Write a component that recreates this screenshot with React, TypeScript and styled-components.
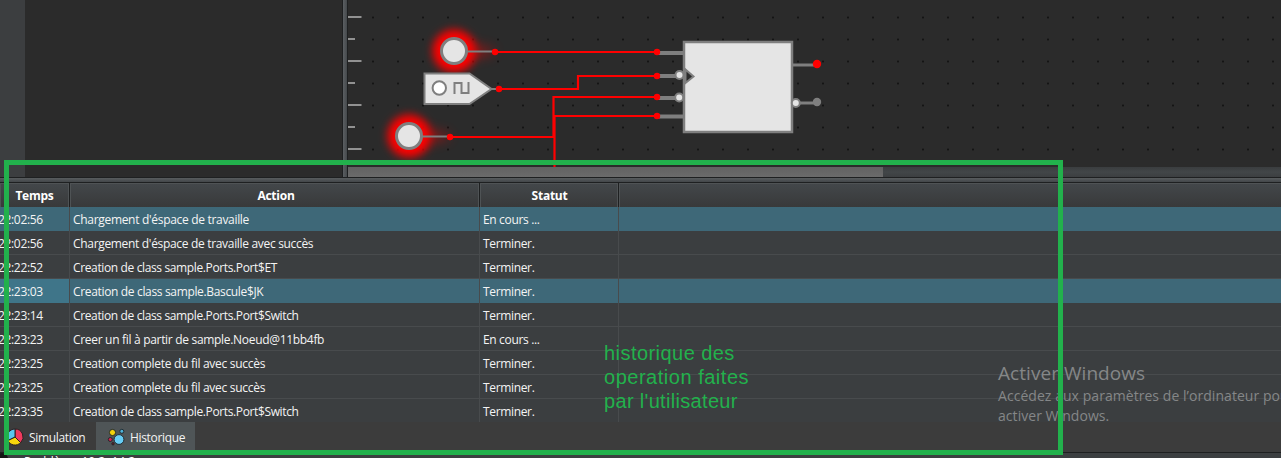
import React from 'react';
import styled, { createGlobalStyle } from 'styled-components';

const Global = createGlobalStyle`
  * { box-sizing: border-box; }
  body { margin: 0; background: #2b2b2b; overflow: hidden; }
`;

const Window = styled.div`
  position: relative;
  width: 1281px;
  height: 458px;
  overflow: hidden;
  display: flex;
  flex-direction: column;
  background: #3c3e40;
  color: #f4f4f4;
  font: 12px/24px 'Open Sans', 'Noto Sans', sans-serif;
`;

const Workspace = styled.div`
  display: flex;
  flex: none;
  height: 177px;
`;

const SideBar = styled.div`
  width: 25px;
  background: #3c3e40;
`;

const Explorer = styled.div`
  width: 317px;
  background: #2b2b2b;
`;

const VerticalSplitter = styled.div`
  width: 6px;
  border: solid #1e2021;
  border-width: 0 1px;
  background: linear-gradient(90deg, #5b5f62, #45494c);
`;

const Editor = styled.div`
  flex: 1;
  display: flex;
  flex-direction: column;
  background: #2b2b2b;
`;

const Board = styled.svg`
  display: block;
  flex: none;
`;

const ScrollTrack = styled.div`
  height: 10px;
  background: linear-gradient(#3a3d3f, #424648 50%, #3c3f41);
`;

const ScrollThumb = styled.div`
  width: 535px;
  height: 10px;
  background: linear-gradient(#626262, #6b6b6b);
`;

const HorizontalSplitter = styled.div`
  flex: none;
  height: 5px;
  border-top: 1px solid #1e2021;
  background: linear-gradient(#585c5e, #43474a);
`;

const columns = '70px 410px 139px 1fr';

const HeaderRow = styled.div`
  flex: none;
  display: grid;
  grid-template-columns: ${columns};
  height: 25px;
  border: solid #1e2021;
  border-width: 1px 0;
`;

const HeaderCell = styled.div<{ $shift?: number }>`
  border: 1px solid #4f5355;
  border-bottom-color: #434547;
  box-shadow: 1px 0 #1e2021;
  margin-right: 1px;
  padding-left: ${(p) => p.$shift ?? 0}px;
  background: linear-gradient(#43474a, #38393a);
  font-weight: 700;
  letter-spacing: -0.25px;
  color: #fff;
  text-align: center;
  line-height: 23px;
  &:last-child { margin-right: 0; border-right: 0; }
`;

const Rows = styled.div`
  flex: none;
  height: 215px;
  overflow: hidden;
  background: #3b3e40;
`;

const Row = styled.div<{ $selected?: boolean }>`
  display: grid;
  grid-template-columns: ${columns};
  height: 24px;
  background: ${(p) => (p.$selected ? '#3e6878' : 'transparent')};
  border-bottom: 1px solid ${(p) => (p.$selected ? '#3e6878' : '#484b4d')};
`;

const Cell = styled.div<{ $focused?: boolean; $spacing?: number }>`
  height: 24px;
  border-right: 1px solid #484b4d;
  padding-left: 3px;
  line-height: 25px;
  white-space: nowrap;
  letter-spacing: ${(p) => p.$spacing ?? -0.34}px;
  background: ${(p) => (p.$focused ? '#3f7589' : 'transparent')};
  &:first-child { padding-left: 0; text-indent: -2px; }
  &:last-child { border-right: 0; }
`;

const Tabs = styled.div`
  flex: none;
  display: flex;
  height: 30px;
  background: #3c3c3c;
`;

const Tab = styled.div<{ $active?: boolean; $width: number }>`
  display: flex;
  align-items: center;
  gap: 5px;
  width: ${(p) => p.$width}px;
  height: 30px;
  padding-left: ${(p) => (p.$active ? 11 : 6)}px;
  background: ${(p) => (p.$active ? '#4f5557' : 'transparent')};
  letter-spacing: -0.33px;
`;

const TabLabel = styled.span`
  padding-top: 2px;
`;

const StatusBar = styled.div`
  flex: none;
  display: flex;
  gap: 16px;
  height: 6px;
  border-top: 1px solid #1e2021;
  background: #3c3f41;
  overflow: hidden;
`;

const StatusDot = styled.span`
  width: 12px;
  height: 12px;
  margin: 0 0 0 -4px;
  border-radius: 50%;
  background: #151515;
`;

const StatusText = styled.span`
  padding-top: 1px;
  line-height: 16px;
  color: #fff;
  white-space: pre;
`;

const Frame = styled.div`
  position: absolute;
  left: 4px;
  top: 160px;
  width: 1059px;
  height: 295px;
  border: 5px solid #22b14c;
`;

const Note = styled.div`
  position: absolute;
  left: 604px;
  top: 341px;
  color: #22b14c;
  font: 20px/24px 'Liberation Sans', Arial, sans-serif;
`;

const NoteLine = styled.div<{ $spacing: number }>`
  white-space: pre;
  letter-spacing: ${(p) => p.$spacing}px;
`;

const Watermark = styled.div`
  position: absolute;
  left: 998px;
  top: 361px;
  color: #858788;
  white-space: pre;
  font-size: 14px;
  line-height: 20px;
  letter-spacing: 0.05px;
`;

const WatermarkTitle = styled.div`
  font-size: 19px;
  line-height: 25px;
`;

type Entry = {
  time: string;
  action: string;
  status: string;
  spacing: number;
  selected?: boolean;
  focused?: boolean;
};

const entries: Entry[] = [
  { time: '22:02:56', action: "Chargement d'éspace de travaille", status: 'En cours ...', spacing: -0.31, selected: true },
  { time: '22:02:56', action: "Chargement d'éspace de travaille avec succès", status: 'Terminer.', spacing: -0.32 },
  { time: '22:22:52', action: 'Creation de class sample.Ports.Port$ET', status: 'Terminer.', spacing: -0.37 },
  { time: '22:23:03', action: 'Creation de class sample.Bascule$JK', status: 'Terminer.', spacing: -0.34, selected: true, focused: true },
  { time: '22:23:14', action: 'Creation de class sample.Ports.Port$Switch', status: 'Terminer.', spacing: -0.37 },
  { time: '22:23:23', action: 'Creer un fil à partir de sample.Noeud@11bb4fb', status: 'En cours ...', spacing: -0.31 },
  { time: '22:23:25', action: 'Creation complete du fil avec succès', status: 'Terminer.', spacing: -0.29 },
  { time: '22:23:25', action: 'Creation complete du fil avec succès', status: 'Terminer.', spacing: -0.29 },
  { time: '22:23:35', action: 'Creation de class sample.Ports.Port$Switch', status: 'Terminer.', spacing: -0.37 },
];

const Switch = ({ x, y }: { x: number; y: number }) => (
  <g>
    <path d={`M${x} ${y - 12}L${x + 40} ${y - 2}V${y + 3}L${x} ${y + 12}Z`} fill="#f00" filter="url(#trail)" opacity=".4" />
    <circle cx={x} cy={y} r="21.500" fill="#f00" filter="url(#soft)" />
    <path d={`M${x + 13} ${y + 0.5}H${x + 40}`} stroke="#7f7f7f" strokeWidth="2" />
    <circle cx={x} cy={y} r="12.500" fill="#e5e5e5" stroke="#7f7f7f" strokeWidth="3" />
  </g>
);

const Circuit = () => (
  <Board width="933" height="167" viewBox="348 0 933 167">
    <defs>
      <pattern id="dots" x="372" y="16" width="25" height="22" patternUnits="userSpaceOnUse">
        <path d="M0 0.5H2M0 2.5H2" stroke="#222" />
        <path d="M0 1.5H2" stroke="#141414" />
      </pattern>
      <filter id="soft" x="-50%" y="-50%" width="200%" height="200%">
        <feGaussianBlur stdDeviation="4.500" />
      </filter>
      <filter id="trail" x="-50%" y="-80%" width="200%" height="260%">
        <feGaussianBlur stdDeviation="6" />
      </filter>
    </defs>
    <rect x="368" width="913" height="167" fill="url(#dots)" />
    <path d="M348 17H361.500M348 61H361.500M348 105H361.500M348 149H361.500M348 39H355M348 83H355M348 127H355" stroke="#929292" strokeWidth="2" />
    <Switch x={454} y={51} />
    <Switch x={409} y={136} />
    <path d="M424.500 73.500H469.500L491.500 89L469.500 104H424.500Z" fill="#e5e5e5" stroke="#7f7f7f" strokeWidth="2" />
    <circle cx="439.300" cy="88" r="6.700" fill="#fff" stroke="#7f7f7f" strokeWidth="2" />
    <path d="M454.500 94V83H461.500V93H468.500V82" fill="none" stroke="#7f7f7f" strokeWidth="2" />
    <path d="M491 89H497" stroke="#7f7f7f" strokeWidth="2" />
    <g stroke="#7f7f7f" strokeWidth="4">
      <path d="M657 53H684M657 76H684M657 98H684M657 116.500H684" />
      <path d="M793 65H814M798 103H814" strokeWidth="3" />
    </g>
    <rect x="684" y="42" width="108" height="90" fill="#e5e5e5" stroke="#7f7f7f" strokeWidth="2.500" />
    <path d="M685.500 69.500L693.500 76.500L685.500 83Z" fill="#2b2b2b" stroke="#7f7f7f" strokeWidth="2" />
    <g fill="#e5e5e5" stroke="#7f7f7f" strokeWidth="2">
      <circle cx="679.500" cy="75" r="4" />
      <circle cx="679.200" cy="97.500" r="4" />
      <circle cx="795.800" cy="103" r="4" />
    </g>
    <g fill="none" stroke="#f00" strokeWidth="2.200">
      <path d="M495 52H657" />
      <path d="M499 89H578V76H657" />
      <path d="M450 137H553.500V97H657" />
      <path d="M657 116H554.500V167" />
    </g>
    <g fill="#f00">
      <circle cx="495" cy="52" r="3.200" />
      <circle cx="499" cy="89" r="3.200" />
      <circle cx="450" cy="137" r="3.200" />
      <circle cx="657" cy="52" r="3.200" />
      <circle cx="657" cy="76" r="3.200" />
      <circle cx="657" cy="97" r="3.200" />
      <circle cx="657" cy="116" r="3.200" />
      <circle cx="817" cy="64" r="4.200" />
    </g>
    <circle cx="817" cy="102" r="4.200" fill="#7f7f7f" />
  </Board>
);

const PieIcon = () => (
  <svg width="18" height="18" viewBox="0 0 18 18" stroke="#2a2023" strokeWidth="1">
    <path d="M9 9V1A8 8 0 0 1 14.700 14.700Z" fill="#ef3a5d" />
    <path d="M9 9L14.700 14.700A8 8 0 0 1 1.800 12.500Z" fill="#f7d70c" />
    <path d="M9 9L1.800 12.500A8 8 0 0 1 9 1Z" fill="#5ac8ef" />
  </svg>
);

const BubblesIcon = () => (
  <svg width="18" height="18" viewBox="0 0 18 18" stroke="#1b2428" strokeWidth=".9">
    <circle cx="12" cy="11.500" r="4.900" fill="#67cdf5" />
    <circle cx="5.500" cy="4.500" r="3.100" fill="#f3d20d" />
    <circle cx="14.800" cy="3.300" r="2" fill="#4fb1d8" />
    <circle cx="3.300" cy="11.500" r="2" fill="#d8234c" />
    <circle cx="6" cy="15.800" r="1.200" fill="#7a1c24" />
  </svg>
);

export default function App() {
  return (
    <Window>
      <Global />
      <Workspace>
        <SideBar />
        <Explorer />
        <VerticalSplitter />
        <Editor>
          <Circuit />
          <ScrollTrack>
            <ScrollThumb />
          </ScrollTrack>
        </Editor>
      </Workspace>
      <HorizontalSplitter />
      <HeaderRow>
        <HeaderCell>Temps</HeaderCell>
        <HeaderCell $shift={3}>Action</HeaderCell>
        <HeaderCell $shift={1}>Statut</HeaderCell>
        <HeaderCell />
      </HeaderRow>
      <Rows>
        {entries.map(({ time, action, status, spacing, selected, focused }, i) => (
          <Row key={i} $selected={selected}>
            <Cell $focused={focused}>{time}</Cell>
            <Cell $spacing={spacing}>{action}</Cell>
            <Cell>{status}</Cell>
            <Cell />
          </Row>
        ))}
      </Rows>
      <Tabs>
        <Tab $width={96}>
          <PieIcon />
          <TabLabel>Simulation</TabLabel>
        </Tab>
        <Tab $width={99} $active>
          <BubblesIcon />
          <TabLabel>Historique</TabLabel>
        </Tab>
      </Tabs>
      <StatusBar>
        <StatusDot />
        <StatusText>Problème 10.2, 14.2</StatusText>
      </StatusBar>
      <Watermark>
        <WatermarkTitle>Activer Windows</WatermarkTitle>
        {'Accédez aux paramètres de l’ordinateur pour\nactiver Windows.'}
      </Watermark>
      <Frame />
      <Note>
        <NoteLine $spacing={0.45}>historique des</NoteLine>
        <NoteLine $spacing={0.52}>operation faites</NoteLine>
        <NoteLine $spacing={0.32}>par l'utilisateur</NoteLine>
      </Note>
    </Window>
  );
}
